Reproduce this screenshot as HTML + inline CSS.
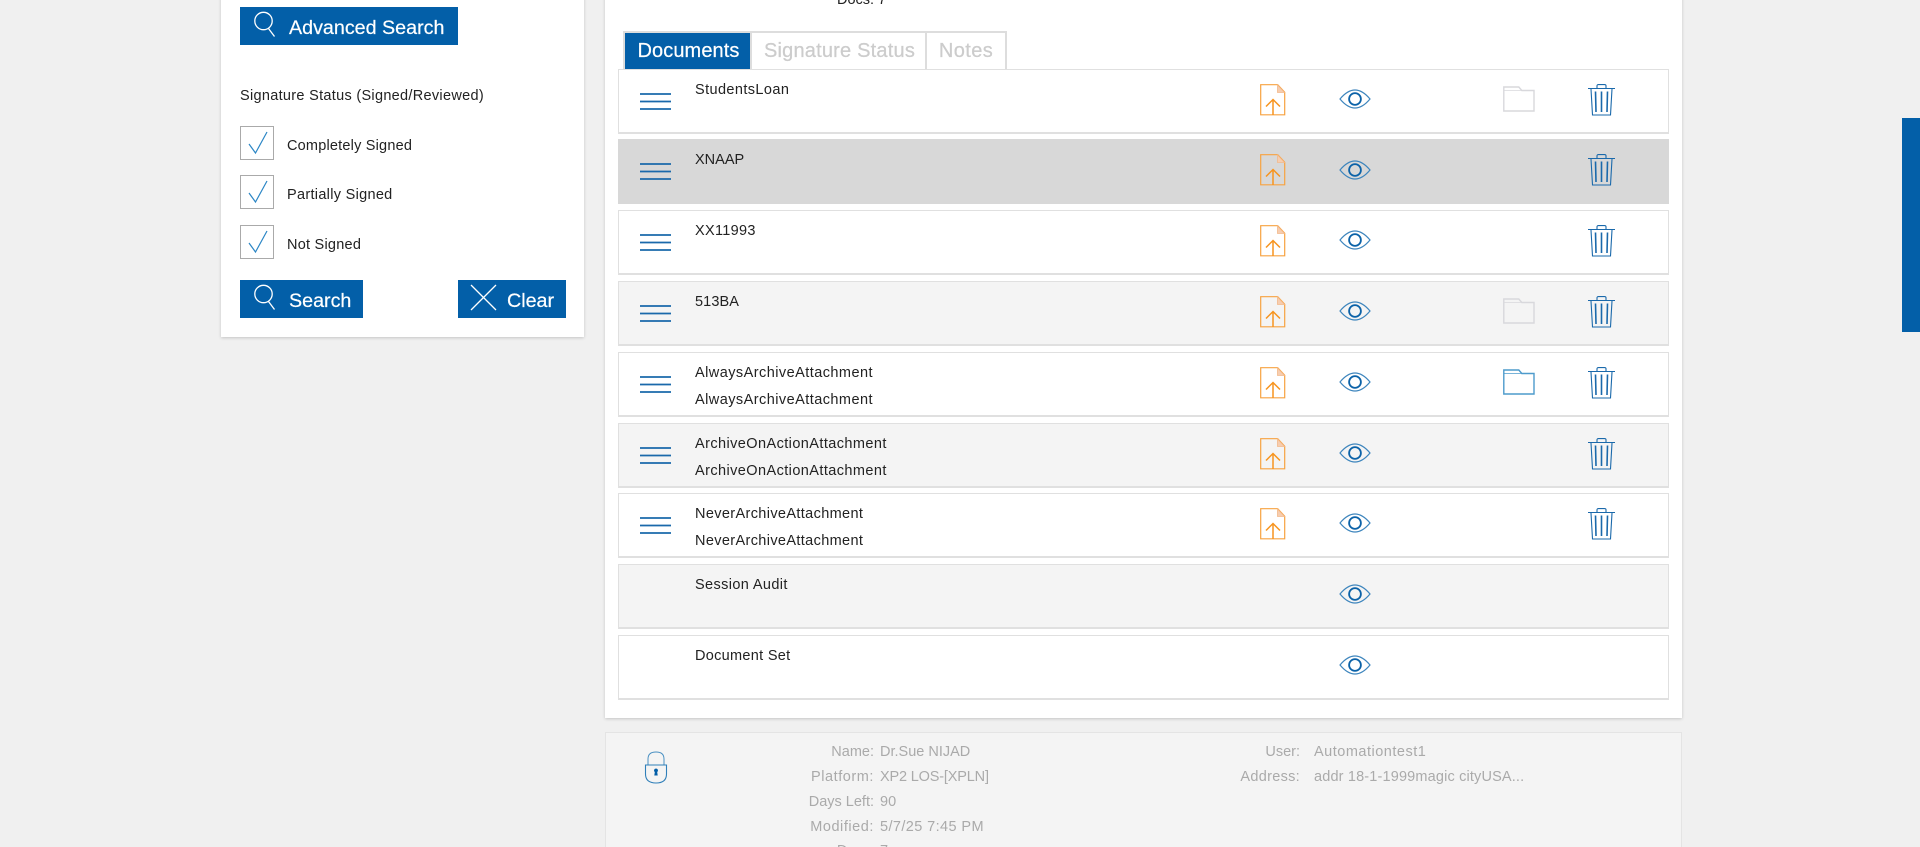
<!DOCTYPE html>
<html><head><meta charset="utf-8"><style>
*{box-sizing:border-box}
html,body{margin:0;padding:0;width:1920px;height:847px;overflow:hidden;background:#f0f0f0;font-family:"Liberation Sans",Arial,sans-serif}
body{position:relative}
.a{position:absolute}
.card{position:absolute;background:#fff;box-shadow:0 1px 3px rgba(0,0,0,.18)}
.btn{position:absolute;background:#035fa8;color:#fff;height:38px;font-size:19.7px;line-height:43px;white-space:nowrap;-webkit-text-stroke:.2px #fff}
.btn span{position:absolute;top:0}
.btn svg{position:absolute;left:14px;top:4px}
.t{position:absolute;color:#222;font-size:14.5px;white-space:nowrap;line-height:18px}
.cb{position:absolute;left:240px;width:34px;height:34px;border:1px solid #aaa;background:#fff}
.cb svg{position:absolute;left:7px;top:4px}
.tab{position:absolute;top:33px;height:36px;font-size:20px;line-height:37px;text-align:center;color:#ccc;background:#fff;-webkit-text-stroke:.25px #ccc}
.row{position:absolute;left:618px;width:1051px;height:65px;border:1px solid #e0e0e0;border-bottom:2px solid #e0e0e0;background:#fff}
.g{background:#f4f4f4}
.row svg{position:absolute}
.m{left:21px;top:23px}.f{left:641px;top:14px}.e{left:720px;top:19px}.d{left:884px;top:16px}.r{left:969px;top:14px}
.n{position:absolute;left:76px;font-size:14.5px;line-height:18px;color:#222;white-space:nowrap}
.n.a1{top:11px}.n.a2{top:38px}
.l,.v{position:absolute;font-size:14.5px;line-height:18px;color:#aaa;white-space:nowrap}
.l{text-align:right;width:140px}
</style></head><body>
<svg width="0" height="0" style="position:absolute"><defs>
<symbol id="mg" viewBox="0 0 24 28"><circle cx="9.500" cy="10" r="8.700" fill="none" stroke="#fff" stroke-width="1.300"/><path d="M14.500 17.500l6 8" stroke="#fff" stroke-width="1.300" fill="none"/></symbol>
<symbol id="menu" viewBox="0 0 32 17"><path d="M0 1h31M0 8.500h31M0 16h31" stroke="#1a69ab" stroke-width="1.700" fill="none"/></symbol>
<symbol id="file" viewBox="0 0 26 32"><path d="M.7.700h17l7 7.500v22.600H.7z" fill="none" stroke="#f7a240" stroke-width="1.200"/><path d="M17.500 1v7.500h7z" fill="#f6cdb0" stroke="#f3b98a" stroke-width=".8"/><path d="M13 31V15.500M6 22.500l7-7 7 7" fill="none" stroke="#f7941e" stroke-width="1.500"/></symbol>
<symbol id="eye" viewBox="0 0 32 20"><path d="M1 10C6 4 11 1 16 1s10 3 15 9c-5 6-10 9-15 9S6 16 1 10z" fill="none" stroke="#3d85bd" stroke-width="1.200"/><circle cx="16" cy="10" r="5.900" fill="none" stroke="#0b62a8" stroke-width="1.800"/></symbol>
<symbol id="folder" viewBox="0 0 32 26"><path d="M.8 4.500V1h15l3 3.500H31v20.500H.8z" fill="none" stroke="currentColor" stroke-width="1.400"/><path d="M.8 4.500h18" stroke="currentColor" stroke-width=".8" fill="none"/></symbol>
<symbol id="trash" viewBox="0 0 27 32"><path d="M0 4.500h27M9 4.300V1.800Q9 .6 10.500 .6h6Q18 .6 18 1.800v2.500M3 5l1.500 26h18L24 5" fill="none" stroke="#1a69ab" stroke-width="1.100"/><path d="M7.500 7.500l.5 20.500M13.500 7.500v20.500M19.500 7.500l-.5 20.500" stroke="#1a69ab" stroke-width="1.600" fill="none"/></symbol>
<symbol id="chk" viewBox="0 0 20 24"><path d="M1 13l6.500 9L19 1" fill="none" stroke="#2b86c5" stroke-width="1.200"/></symbol>
</defs></svg>

<div class="card" style="left:221px;top:-5px;width:363px;height:342px"></div>
<div class="btn" style="left:240px;top:7px;width:218px"><svg width="24" height="28"><use href="#mg"/></svg><span style="left:49px">Advanced Search</span></div>
<div class="t" style="left:240px;top:87px;letter-spacing:.3px">Signature Status (Signed/Reviewed)</div>
<div class="cb" style="top:126px"><svg width="20" height="24"><use href="#chk"/></svg></div>
<div class="t" style="left:287px;top:137px;letter-spacing:.2px">Completely Signed</div>
<div class="cb" style="top:175px"><svg width="20" height="24"><use href="#chk"/></svg></div>
<div class="t" style="left:287px;top:186px;letter-spacing:.3px">Partially Signed</div>
<div class="cb" style="top:225px"><svg width="20" height="24"><use href="#chk"/></svg></div>
<div class="t" style="left:287px;top:236px;letter-spacing:.24px">Not Signed</div>
<div class="btn" style="left:240px;top:280px;width:123px"><svg width="24" height="28"><use href="#mg"/></svg><span style="left:49px">Search</span></div>
<div class="btn" style="left:458px;top:280px;width:108px"><svg width="28" height="28" style="left:12px;top:4px"><path d="M1 1l25 25M26 1L1 26" stroke="#fff" stroke-width="1.300" fill="none"/></svg><span style="left:49px">Clear</span></div>

<div class="card" style="left:605px;top:-5px;width:1077px;height:723px"></div>
<div class="t" style="left:837px;top:-9px">Docs: 7</div>
<div class="a" style="left:623px;top:31px;width:384px;height:38px;background:#ddd"></div>
<div class="tab" style="left:625px;width:125px;background:#035fa8;color:#fff;-webkit-text-stroke:.2px #fff;letter-spacing:.1px;padding-left:2px">Documents</div>
<div class="tab" style="left:752px;width:173px;letter-spacing:.2px;padding-left:2px">Signature Status</div>
<div class="tab" style="left:927px;width:78px;letter-spacing:.4px">Notes</div>

<div class="row" style="top:69px"><svg class="m" width="32" height="17"><use href="#menu"/></svg><div class="n a1" style="letter-spacing:.4px">StudentsLoan</div><svg class="f" width="26" height="32"><use href="#file"/></svg><svg class="e" width="32" height="20"><use href="#eye"/></svg><svg class="d" width="32" height="26" style="color:#d8d8dc"><use href="#folder"/></svg><svg class="r" width="27" height="32"><use href="#trash"/></svg></div>
<div class="row" style="top:139px;background:#d8d8d8;border-color:#d8d8d8"><svg class="m" width="32" height="17"><use href="#menu"/></svg><div class="n a1">XNAAP</div><svg class="f" width="26" height="32"><use href="#file"/></svg><svg class="e" width="32" height="20" style="top:20px"><use href="#eye"/></svg><svg class="r" width="27" height="32"><use href="#trash"/></svg></div>
<div class="row" style="top:210px"><svg class="m" width="32" height="17"><use href="#menu"/></svg><div class="n a1" style="letter-spacing:.3px">XX11993</div><svg class="f" width="26" height="32"><use href="#file"/></svg><svg class="e" width="32" height="20"><use href="#eye"/></svg><svg class="r" width="27" height="32"><use href="#trash"/></svg></div>
<div class="row g" style="top:281px"><svg class="m" width="32" height="17"><use href="#menu"/></svg><div class="n a1" style="letter-spacing:.1px">513BA</div><svg class="f" width="26" height="32"><use href="#file"/></svg><svg class="e" width="32" height="20"><use href="#eye"/></svg><svg class="d" width="32" height="26" style="color:#d8d8dc"><use href="#folder"/></svg><svg class="r" width="27" height="32"><use href="#trash"/></svg></div>
<div class="row" style="top:352px"><svg class="m" width="32" height="17"><use href="#menu"/></svg><div class="n a1" style="letter-spacing:.45px">AlwaysArchiveAttachment</div><div class="n a2" style="letter-spacing:.45px">AlwaysArchiveAttachment</div><svg class="f" width="26" height="32"><use href="#file"/></svg><svg class="e" width="32" height="20"><use href="#eye"/></svg><svg class="d" width="32" height="26" style="color:#4d9bcc"><use href="#folder"/></svg><svg class="r" width="27" height="32"><use href="#trash"/></svg></div>
<div class="row g" style="top:423px"><svg class="m" width="32" height="17"><use href="#menu"/></svg><div class="n a1" style="letter-spacing:.42px">ArchiveOnActionAttachment</div><div class="n a2" style="letter-spacing:.42px">ArchiveOnActionAttachment</div><svg class="f" width="26" height="32"><use href="#file"/></svg><svg class="e" width="32" height="20"><use href="#eye"/></svg><svg class="r" width="27" height="32"><use href="#trash"/></svg></div>
<div class="row" style="top:493px"><svg class="m" width="32" height="17"><use href="#menu"/></svg><div class="n a1" style="letter-spacing:.36px">NeverArchiveAttachment</div><div class="n a2" style="letter-spacing:.36px">NeverArchiveAttachment</div><svg class="f" width="26" height="32"><use href="#file"/></svg><svg class="e" width="32" height="20"><use href="#eye"/></svg><svg class="r" width="27" height="32"><use href="#trash"/></svg></div>
<div class="row g" style="top:564px"><div class="n a1" style="letter-spacing:.38px">Session Audit</div><svg class="e" width="32" height="20"><use href="#eye"/></svg></div>
<div class="row" style="top:635px"><div class="n a1" style="letter-spacing:.3px">Document Set</div><svg class="e" width="32" height="20"><use href="#eye"/></svg></div>

<div class="a" style="left:605px;top:732px;width:1077px;height:130px;background:#f4f4f4;border:1px solid #e4e4e4"></div>
<svg class="a" style="left:644px;top:751px" width="24" height="33" viewBox="0 0 24 33"><path d="M4 14V8q0-7 8-7t8 7v6" fill="none" stroke="#4a90c2" stroke-width="1"/><path d="M1.500 14h21v9q0 9-10.500 9T1.500 23z" fill="none" stroke="#2f7fb9" stroke-width="1.100"/><path d="M12 17.500a2 2 0 0 1 1.200 3.600l.5 3.400h-3.400l.5-3.400A2 2 0 0 1 12 17.500z" fill="#035fa8"/></svg>
<div class="l" style="left:734px;top:743px">Name:</div><div class="v" style="left:880px;top:743px">Dr.Sue NIJAD</div>
<div class="l" style="left:734px;top:768px;letter-spacing:.55px">Platform:</div><div class="v" style="left:880px;top:768px;letter-spacing:-.17px">XP2 LOS-[XPLN]</div>
<div class="l" style="left:734px;top:793px">Days Left:</div><div class="v" style="left:880px;top:793px">90</div>
<div class="l" style="left:734px;top:818px;letter-spacing:.55px">Modified:</div><div class="v" style="left:880px;top:818px;letter-spacing:.4px">5/7/25 7:45 PM</div>
<div class="l" style="left:734px;top:842px">Docs:</div><div class="v" style="left:880px;top:842px">7</div>
<div class="l" style="left:1160px;top:743px">User:</div><div class="v" style="left:1314px;top:743px;letter-spacing:.5px">Automationtest1</div>
<div class="l" style="left:1160px;top:768px;letter-spacing:.3px">Address:</div><div class="v" style="left:1314px;top:768px;letter-spacing:.16px">addr 18-1-1999magic cityUSA...</div>

<div class="a" style="left:1902px;top:118px;width:18px;height:214px;background:#035fa8"></div>
</body></html>
